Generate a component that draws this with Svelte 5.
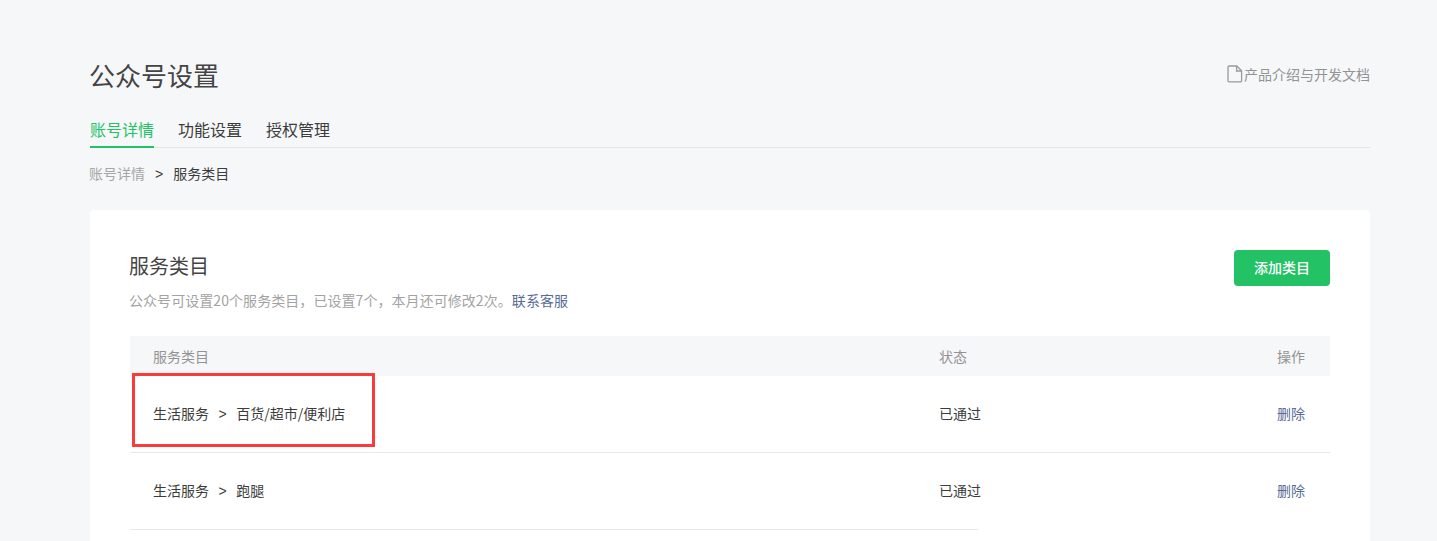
<script>
	const categories = [
		{ name: '生活服务', sub: '百货/超市/便利店', status: '已通过', marked: true },
		{ name: '生活服务', sub: '跑腿', status: '已通过', marked: false }
	];
	const tabs = ['账号详情', '功能设置', '授权管理'];
</script>

<div class="page">
	<header class="page-head">
		<h1>公众号设置</h1>
		<a class="doc-link" href="#doc">
			<svg width="16" height="18" viewBox="0 0 16 18" fill="none" stroke="#9a9a9a" stroke-width="1.3">
				<path d="M2.2 1h7.6L14.6 5.8V15.6a1.2 1.2 0 0 1-1.2 1.2H2.2A1.2 1.2 0 0 1 1 15.6V2.2A1.2 1.2 0 0 1 2.2 1z" />
				<path d="M9.6 1v5h5" />
			</svg>
			<span>产品介绍与开发文档</span>
		</a>
	</header>

	<nav class="tabs">
		{#each tabs as tab, i}
			<a class="tab" class:active={i === 0} href="#tab">{tab}</a>
		{/each}
	</nav>

	<div class="crumbs">
		<a href="#back">账号详情</a>
		<span class="sep">&gt;</span>
		<span class="current">服务类目</span>
	</div>

	<section class="card">
		<div class="card-head">
			<div class="titles">
				<h2>服务类目</h2>
				<p class="desc">公众号可设置20个服务类目，已设置7个，本月还可修改2次。<a href="#help">联系客服</a></p>
			</div>
			<button class="add-btn">添加类目</button>
		</div>

		<div class="table">
			<div class="row head">
				<div>服务类目</div>
				<div>状态</div>
				<div class="op">操作</div>
			</div>
			{#each categories as item}
				<div class="row body" class:short={!item.marked}>
					<div class="path">
						<span>{item.name}</span><span class="sep">&gt;</span><span>{item.sub}</span>
					</div>
					<div>{item.status}</div>
					<div class="op"><a href="#del">删除</a></div>
					{#if item.marked}
						<div class="mark"></div>
					{/if}
				</div>
			{/each}
		</div>
	</section>
</div>

<style>
	:global(body) {
		margin: 0;
		background: #f6f7f9;
		overflow: hidden;
	}

	.page {
		height: 541px;
		overflow: hidden;
		box-sizing: border-box;
		padding: 55px 67px 0 90px;
		font-family: "Noto Sans CJK SC", "Liberation Sans", sans-serif;
		color: #3c3c3c;
	}

	a {
		text-decoration: none;
	}

	.page-head {
		display: flex;
		justify-content: space-between;
		align-items: center;
		height: 40px;
	}

	h1 {
		margin: 0 0 0 -1px;
		font-size: 26px;
		font-weight: 400;
		line-height: 40px;
		color: #444;
	}

	.doc-link {
		display: flex;
		align-items: center;
		font-size: 14px;
		color: #939393;
		margin-top: -2px;
	}

	.doc-link svg {
		margin-right: 1px;
	}

	.tabs {
		display: flex;
		gap: 24px;
		margin-top: 19px;
		height: 33px;
		border-bottom: 1px solid #e3e4e6;
	}

	.tab {
		font-size: 16px;
		line-height: 31px;
		height: 33px;
		color: #3c3c3c;
	}

	.tab.active {
		color: #22c265;
		border-bottom: 2px solid #22c265;
		height: 32px;
	}

	.crumbs {
		margin-top: 15px;
		font-size: 14px;
		line-height: 20px;
		display: flex;
		align-items: baseline;
	}

	.crumbs a {
		color: #a6a6a6;
		margin-left: -1px;
	}

	.sep {
		margin: 0 9.5px;
		font-family: "Liberation Sans", sans-serif;
	}

	.crumbs .sep {
		margin: 0 10px;
	}

	.card {
		margin-top: 26px;
		background: #fff;
		border-radius: 4px;
		padding: 40px;
		height: 600px;
	}

	.card-head {
		display: flex;
		justify-content: space-between;
		align-items: flex-start;
	}

	.titles {
		margin-left: -1px;
	}

	h2 {
		margin: 0;
		font-size: 20px;
		font-weight: 400;
		line-height: 32px;
		color: #444;
	}

	.desc {
		margin: 8px 0 0;
		font-size: 14px;
		line-height: 20px;
		color: #a3a3a3;
		letter-spacing: 0.06px;
	}

	.desc a {
		color: #576b95;
	}

	.add-btn {
		width: 96px;
		height: 36px;
		border: 0;
		border-radius: 4px;
		background: #22c265;
		color: #fff;
		font: inherit;
		font-size: 14px;
		font-weight: 500;
		padding: 0 0 2px;
	}

	.table {
		margin-top: 26px;
		font-size: 14px;
	}

	.row {
		display: grid;
		grid-template-columns: 786px 1fr 100px;
		align-items: center;
		padding: 0 25px 0 23px;
		position: relative;
	}

	.row.head {
		height: 40px;
		background: #f6f7f9;
		color: #939393;
		padding-bottom: 1px;
		box-sizing: border-box;
	}

	.row.body {
		border-bottom: 1px solid #e8e8e8;
		padding-bottom: 3px;
		height: 73px;
	}

	/* second rule stops short in the capture */
	.row.body.short {
		border-bottom: 0;
		height: 74px;
	}

	.row.body.short::after {
		content: '';
		position: absolute;
		left: 0;
		bottom: 0;
		width: 848px;
		height: 1px;
		background: #e8e8e8;
	}

	.path {
		display: flex;
		align-items: baseline;
	}

	.op {
		text-align: right;
	}

	.op a {
		color: #576b95;
	}

	.mark {
		position: absolute;
		left: 2px;
		top: -3px;
		width: 237px;
		height: 68px;
		border: 3px solid #fb3a3a;
	}
</style>
